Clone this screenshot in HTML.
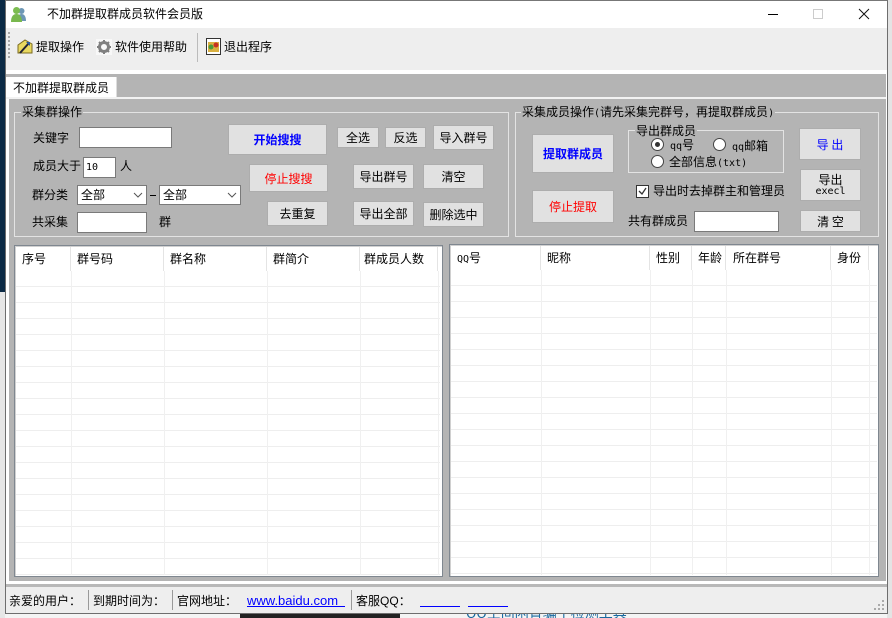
<!DOCTYPE html>
<html><head><meta charset="utf-8">
<style>
html,body{margin:0;padding:0;width:892px;height:618px;overflow:hidden;background:#f4f4f4}
body{position:relative;font:12px/14px "WenQuanYi Zen Hei","Noto Sans CJK SC",sans-serif;color:#000}
div,span.a{position:absolute;box-sizing:border-box}
.t{white-space:nowrap;line-height:14px;height:14px}
.m{font:10px/14px "DejaVu Sans Mono","Liberation Mono",monospace}
.b{background:#e1e1e1;border:1px solid #adadad;display:flex;align-items:center;justify-content:center;white-space:nowrap;line-height:13px;text-align:center}
.i{background:#fff;border:1px solid #7a7a7a}
.g{border:1px solid #e3e3e3}
.lg{background:#b4b4b4;padding:0 1px}
.s{background:#fff;border:1px solid #7a7a7a;padding:2px 0 0 3px;line-height:14px}
.r{width:13px;height:13px;border-radius:50%;background:#fff;border:1px solid #444}
.tb{background:#fff;border:1px solid #7f8790;box-shadow:inset 1px 1px 0 #d0d0d0}
.rows{background:repeating-linear-gradient(to bottom,transparent 0 15px,#eeeeee 15px 16px)}
.v{width:1px;background:#f0f0f0}
.h{width:1px;background:#e4e4e4}
a{color:#00f}
</style></head><body>
<!-- desktop background -->
<div style="left:0;top:0;width:5px;height:292px;background:#0b2a45"></div>
<div style="left:0;top:292px;width:5px;height:326px;background:#e6e6e6"></div>
<div style="left:240px;top:613px;width:160px;height:5px;background:#222"></div>
<div style="left:400px;top:613px;width:492px;height:5px;background:#f4f4f4;overflow:hidden"><div class="t" style="left:66px;top:-8px;color:#1a6aa0;font-size:14px;line-height:16px;height:16px">QQ空间闲置骗子检测工具</div></div>
<div style="left:887px;top:0;width:5px;height:618px;background:#e4e4e4"></div>
<div style="left:5px;top:0;width:715px;height:1px;background:#0b2a45"></div>

<!-- window -->
<div style="left:5px;top:0;width:883px;height:614px;background:#fff;border:1px solid #6e6e6e;border-top:1px solid #777"></div>
<!-- title bar -->
<svg style="position:absolute;left:10px;top:6px" width="17" height="17" viewBox="0 0 17 17"><circle cx="11.5" cy="5" r="3" fill="#6d97b5"/><path d="M7 15c0-5 2-7 4.500-7s4.500 2 4.500 7z" fill="#6d97b5"/><circle cx="6.500" cy="4.500" r="3.500" fill="#7cbc50"/><path d="M1 16c0-6 2.500-8 5.500-8s5.500 2 5.500 8z" fill="#79b84e"/></svg>
<div class="t" style="left:47px;top:7px">不加群提取群成员软件会员版</div>
<div style="left:768px;top:14px;width:10px;height:1px;background:#000"></div>
<div style="left:813px;top:9px;width:10px;height:10px;border:1px solid #ccc"></div>
<svg style="position:absolute;left:858px;top:8px" width="12" height="12"><path d="M1 1L11 11M11 1L1 11" stroke="#111" stroke-width="1" fill="none"/></svg>

<!-- toolbar -->
<div style="left:6px;top:28px;width:881px;height:42px;background:#eeeeee"></div>
<div style="left:8px;top:32px;width:2px;height:27px;background:repeating-linear-gradient(to bottom,#a8a8a8 0 2px,transparent 2px 4px)"></div>
<svg style="position:absolute;left:17px;top:39px" width="16" height="16" viewBox="0 0 16 16"><path d="M1 6L8 1l7 4v9H1z" fill="#e8d860" stroke="#7a6a20"/><path d="M3 14L12 4" stroke="#223" stroke-width="2"/><path d="M9 3h4v4z" fill="#2a5aa0"/></svg>
<div class="t" style="left:36px;top:40px">提取操作</div>
<svg style="position:absolute;left:96px;top:39px" width="16" height="16" viewBox="0 0 16 16"><rect width="16" height="16" fill="#f8f8f8"/><circle cx="8" cy="8" r="4.500" fill="none" stroke="#808080" stroke-width="3"/><path d="M8 1v3M8 12v3M1 8h3M12 8h3M3 3l2 2M11 11l2 2M13 3l-2 2M5 11l-2 2" stroke="#808080" stroke-width="2"/></svg>
<div class="t" style="left:115px;top:40px">软件使用帮助</div>
<div style="left:197px;top:33px;width:1px;height:29px;background:#bbb"></div>
<svg style="position:absolute;left:206px;top:38px" width="15" height="17" viewBox="0 0 15 17"><rect x=".5" y=".5" width="14" height="16" fill="#fff" stroke="#333"/><rect x="2" y="4" width="11" height="10" fill="#d9b040"/><circle cx="5" cy="9" r="2.500" fill="#4a9a3a"/><circle cx="10" cy="7" r="2.500" fill="#c83020"/></svg>
<div class="t" style="left:224px;top:40px">退出程序</div>

<!-- tab strip -->
<div style="left:6px;top:74px;width:880px;height:23px;background:#b4b4b4"></div>
<div style="left:6px;top:77px;width:111px;height:21px;background:#fff;border-right:1px solid #ddd"></div>
<div class="t" style="left:13px;top:81px">不加群提取群成员</div>
<!-- main panel -->
<div style="left:6px;top:97px;width:880px;height:2px;background:#f2f2f2"></div>
<div style="left:9px;top:99px;width:877px;height:482px;background:#b4b4b4"></div>

<!-- left group -->
<div class="g" style="left:14px;top:112px;width:495px;height:125px"></div>
<div class="t lg" style="left:21px;top:105px">采集群操作</div>
<div class="t" style="left:33px;top:131px">关键字</div>
<div class="i" style="left:79px;top:127px;width:93px;height:21px"></div>
<div class="t" style="left:33px;top:159px">成员大于</div>
<div class="i t m" style="left:83px;top:157px;width:33px;height:21px;padding:3px 0 0 2px;font-size:10px;line-height:14px">10</div>
<div class="t" style="left:120px;top:159px">人</div>
<div class="t" style="left:32px;top:188px">群分类</div>
<div class="s" style="left:77px;top:185px;width:70px;height:20px">全部</div>
<svg style="position:absolute;left:133px;top:192px" width="10" height="6"><path d="M1 1l4 4 4-4" stroke="#555" fill="none"/></svg>
<div style="left:150px;top:195px;width:6px;height:1px;background:#000"></div>
<div class="s" style="left:159px;top:185px;width:82px;height:20px">全部</div>
<svg style="position:absolute;left:227px;top:192px" width="10" height="6"><path d="M1 1l4 4 4-4" stroke="#555" fill="none"/></svg>
<div class="t" style="left:32px;top:215px">共采集</div>
<div class="i" style="left:77px;top:212px;width:70px;height:21px"></div>
<div class="t" style="left:159px;top:215px">群</div>

<div class="b" style="left:228px;top:124px;width:99px;height:31px;color:#00f;font-weight:bold">开始搜搜</div>
<div class="b" style="left:249px;top:164px;width:79px;height:28px;color:#f00">停止搜搜</div>
<div class="b" style="left:267px;top:201px;width:61px;height:25px">去重复</div>
<div class="b" style="left:337px;top:127px;width:42px;height:21px">全选</div>
<div class="b" style="left:385px;top:127px;width:41px;height:21px">反选</div>
<div class="b" style="left:433px;top:125px;width:61px;height:25px">导入群号</div>
<div class="b" style="left:353px;top:164px;width:61px;height:25px">导出群号</div>
<div class="b" style="left:423px;top:164px;width:61px;height:25px">清空</div>
<div class="b" style="left:353px;top:201px;width:61px;height:25px">导出全部</div>
<div class="b" style="left:423px;top:202px;width:61px;height:25px">删除选中</div>

<!-- right group -->
<div class="g" style="left:515px;top:112px;width:364px;height:125px"></div>
<div class="t lg" style="left:521px;top:105px">采集成员操作<span class="m">(</span>请先采集完群号，再提取群成员<span class="m">)</span></div>
<div class="b" style="left:532px;top:134px;width:82px;height:39px;color:#00f;font-weight:bold">提取群成员</div>
<div class="b" style="left:532px;top:190px;width:82px;height:33px;color:#f00">停止提取</div>
<div class="g" style="left:628px;top:130px;width:156px;height:43px"></div>
<div class="t lg" style="left:635px;top:124px">导出群成员</div>
<div class="r" style="left:651px;top:138px"><div style="left:3px;top:3px;width:5px;height:5px;border-radius:50%;background:#333"></div></div>
<div class="t" style="left:670px;top:138px"><span class="m">qq</span>号</div>
<div class="r" style="left:713px;top:138px"></div>
<div class="t" style="left:732px;top:139px"><span class="m">qq</span>邮箱</div>
<div class="r" style="left:651px;top:155px"></div>
<div class="t" style="left:669px;top:155px">全部信息<span class="m">(txt)</span></div>
<div style="left:636px;top:185px;width:13px;height:13px;background:#fff;border:1px solid #333"></div>
<svg style="position:absolute;left:637px;top:186px" width="11" height="11"><path d="M2 5l3 3 4-6" stroke="#333" fill="none" stroke-width="1.300"/></svg>
<div class="t" style="left:653px;top:184px">导出时去掉群主和管理员</div>
<div class="t" style="left:628px;top:214px">共有群成员</div>
<div class="i" style="left:694px;top:211px;width:85px;height:21px"></div>
<div class="b" style="left:799px;top:128px;width:62px;height:32px;color:#00f">导 出</div>
<div class="b" style="left:800px;top:169px;width:61px;height:32px;flex-direction:column">导出<span class="m" style="line-height:12px">execl</span></div>
<div class="b" style="left:800px;top:210px;width:61px;height:22px">清 空</div>

<!-- left table -->
<div class="tb" style="left:14px;top:245px;width:429px;height:332px"></div>
<div class="rows" style="left:16px;top:271px;width:424px;height:304px"></div>
<div class="h" style="left:70px;top:247px;height:24px"></div>
<div class="h" style="left:163px;top:247px;height:24px"></div>
<div class="h" style="left:266px;top:247px;height:24px"></div>
<div class="h" style="left:359px;top:247px;height:24px"></div>
<div class="h" style="left:437px;top:247px;height:24px"></div>
<div class="v" style="left:71px;top:271px;height:304px"></div>
<div class="v" style="left:164px;top:271px;height:304px"></div>
<div class="v" style="left:267px;top:271px;height:304px"></div>
<div class="v" style="left:360px;top:271px;height:304px"></div>
<div class="v" style="left:438px;top:271px;height:304px"></div>
<div class="t" style="left:22px;top:252px">序号</div>
<div class="t" style="left:77px;top:252px">群号码</div>
<div class="t" style="left:170px;top:252px">群名称</div>
<div class="t" style="left:273px;top:252px">群简介</div>
<div class="t" style="left:364px;top:252px">群成员人数</div>

<!-- right table -->
<div class="tb" style="left:449px;top:244px;width:430px;height:333px"></div>
<div class="rows" style="left:451px;top:270px;width:426px;height:305px"></div>
<div class="h" style="left:540px;top:246px;height:24px"></div>
<div class="h" style="left:649px;top:246px;height:24px"></div>
<div class="h" style="left:691px;top:246px;height:24px"></div>
<div class="h" style="left:725px;top:246px;height:24px"></div>
<div class="h" style="left:830px;top:246px;height:24px"></div>
<div class="h" style="left:868px;top:246px;height:24px"></div>
<div class="v" style="left:541px;top:270px;height:305px"></div>
<div class="v" style="left:650px;top:270px;height:305px"></div>
<div class="v" style="left:692px;top:270px;height:305px"></div>
<div class="v" style="left:726px;top:270px;height:305px"></div>
<div class="v" style="left:831px;top:270px;height:305px"></div>
<div class="v" style="left:869px;top:270px;height:305px"></div>
<div class="t" style="left:457px;top:251px"><span class="m">QQ</span>号</div>
<div class="t" style="left:547px;top:251px">昵称</div>
<div class="t" style="left:656px;top:251px">性别</div>
<div class="t" style="left:698px;top:251px">年龄</div>
<div class="t" style="left:733px;top:251px">所在群号</div>
<div class="t" style="left:837px;top:251px">身份</div>

<!-- status bar -->
<div style="left:6px;top:581px;width:881px;height:3px;background:#fff"></div>
<div style="left:6px;top:584px;width:881px;height:3px;background:#b8b8b8"></div>
<div style="left:6px;top:587px;width:881px;height:26px;background:#eeeeee"></div>
<div class="t" style="left:9px;top:594px">亲爱的用户：</div>
<div style="left:88px;top:590px;width:1px;height:20px;background:#999"></div>
<div class="t" style="left:93px;top:594px">到期时间为：</div>
<div style="left:172px;top:590px;width:1px;height:20px;background:#999"></div>
<div class="t" style="left:177px;top:594px">官网地址：</div>
<div class="t" style="left:247px;top:594px;color:#00f;font-family:'Liberation Sans',sans-serif;font-size:13px;width:98px;border-bottom:1px solid #00f;height:13px;line-height:14px">www.baidu.com</div>
<div style="left:351px;top:590px;width:1px;height:20px;background:#999"></div>
<div class="t" style="left:356px;top:594px">客服<span style="font-family:'Liberation Sans',sans-serif">QQ</span>：</div>
<div style="left:420px;top:606px;width:40px;height:1px;background:#00f"></div>
<div style="left:468px;top:606px;width:40px;height:1px;background:#00f"></div>
<svg style="position:absolute;left:874px;top:600px" width="11" height="11"><path d="M8 0h2v2H8zM4 4h2v2H4zM8 4h2v2H8zM0 8h2v2H0zM4 8h2v2H4zM8 8h2v2H8z" fill="#aaa"/></svg>
</body></html>
